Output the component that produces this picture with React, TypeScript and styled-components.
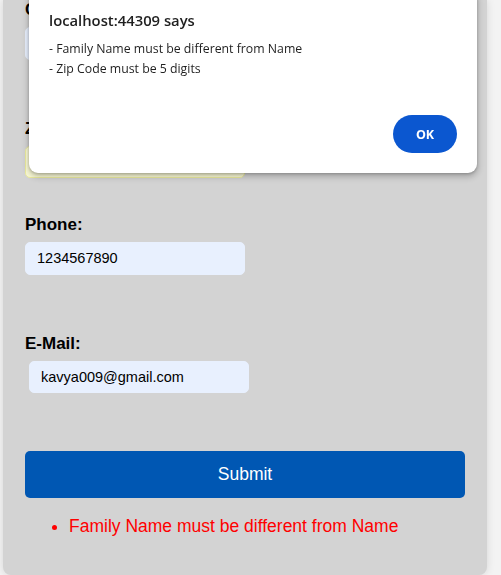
import React from "react";
import styled, { createGlobalStyle } from "styled-components";

const GlobalStyle = createGlobalStyle`
  html, body {
    margin: 0;
    padding: 0;
    background: #f3f3f3;
    overflow: hidden;
    font-family: "Liberation Sans", Arial, sans-serif;
  }
`;

const Page = styled.div`
  padding-left: 3px;
  height: 575px;
  overflow: hidden;
`;

const Panel = styled.form`
  width: 484px;
  box-sizing: border-box;
  background: #d3d3d3;
  border-radius: 0 0 8px 8px;
  padding: 0 22px 22px;
  box-shadow: 0 0 8px rgba(0, 0, 0, 0.12);
`;

const Field = styled.div<{ $after: number }>`
  display: flex;
  flex-direction: column;
  align-items: flex-start;
  gap: 8px;
  margin-bottom: ${(p) => p.$after}px;
`;

const Label = styled.label`
  font-weight: bold;
  font-size: 17px;
  line-height: 19px;
  color: #000;
`;

const Input = styled.input<{ $tone?: "blue" | "yellow"; $indent?: number }>`
  width: 220px;
  height: 32.5px;
  box-sizing: border-box;
  margin: 0 0 0 ${(p) => p.$indent ?? 0}px;
  padding: 0 11px;
  border: 1px solid ${(p) => (p.$tone === "yellow" ? "#ecec9e" : "#e8f0fe")};
  border-radius: 5px;
  background: ${(p) => (p.$tone === "yellow" ? "#fbfbd6" : "#e8f0fe")};
  font-family: "Liberation Sans", Arial, sans-serif;
  font-size: 14.5px;
  color: #000;
  outline: none;
`;

const SubmitButton = styled.button`
  display: block;
  width: 100%;
  height: 47px;
  border: none;
  border-radius: 5px;
  background: #0057b3;
  color: #fff;
  font-family: "Liberation Sans", Arial, sans-serif;
  font-size: 17.5px;
  cursor: pointer;
`;

const ErrorList = styled.ul`
  margin: 17.5px 0;
  padding-left: 44px;
  color: #ff0000;
  font-size: 17.5px;
  line-height: 20px;
`;

const Dialog = styled.div`
  position: fixed;
  left: 29px;
  top: -10px;
  width: 448px;
  box-sizing: border-box;
  padding: 20px;
  background: #fff;
  border-radius: 9px;
  box-shadow: 0 3px 6px 1px rgba(0, 0, 0, 0.22), 0 1px 3px rgba(0, 0, 0, 0.2);
  font-family: "Open Sans", "Noto Sans", sans-serif;
  color: #1f1f1f;
`;

const DialogTitle = styled.div`
  font-size: 14.8px;
  font-weight: 600;
  line-height: 20px;
`;

const DialogMessage = styled.div`
  margin-top: 9px;
  font-size: 12.3px;
  line-height: 20px;
  white-space: pre-line;
`;

const DialogActions = styled.div`
  display: flex;
  justify-content: flex-end;
  margin-top: 36px;
`;

const OkButton = styled.button`
  width: 64px;
  height: 38px;
  border: none;
  border-radius: 19px;
  background: #0b57d0;
  color: #fff;
  font-family: "Open Sans", "Noto Sans", sans-serif;
  font-weight: bold;
  font-size: 12.5px;
  cursor: pointer;
`;

export default function App() {
  return (
    <>
      <GlobalStyle />
      <Page>
        <Panel onSubmit={(e) => e.preventDefault()}>
          <Field $after={59}>
            <Label>City:</Label>
            <Input $tone="blue" defaultValue="Hyderabad" />
          </Field>
          <Field $after={37}>
            <Label>Zip Code:</Label>
            <Input $tone="yellow" defaultValue="5000" />
          </Field>
          <Field $after={59}>
            <Label>Phone:</Label>
            <Input $tone="blue" defaultValue="1234567890" />
          </Field>
          <Field $after={58}>
            <Label>E-Mail:</Label>
            <Input $tone="blue" $indent={4} defaultValue="kavya009@gmail.com" />
          </Field>
          <SubmitButton type="submit">Submit</SubmitButton>
          <ErrorList>
            <li>Family Name must be different from Name</li>
          </ErrorList>
        </Panel>
      </Page>
      <Dialog role="alertdialog">
        <DialogTitle>localhost:44309 says</DialogTitle>
        <DialogMessage>
          {"- Family Name must be different from Name\n- Zip Code must be 5 digits"}
        </DialogMessage>
        <DialogActions>
          <OkButton type="button">OK</OkButton>
        </DialogActions>
      </Dialog>
    </>
  );
}
